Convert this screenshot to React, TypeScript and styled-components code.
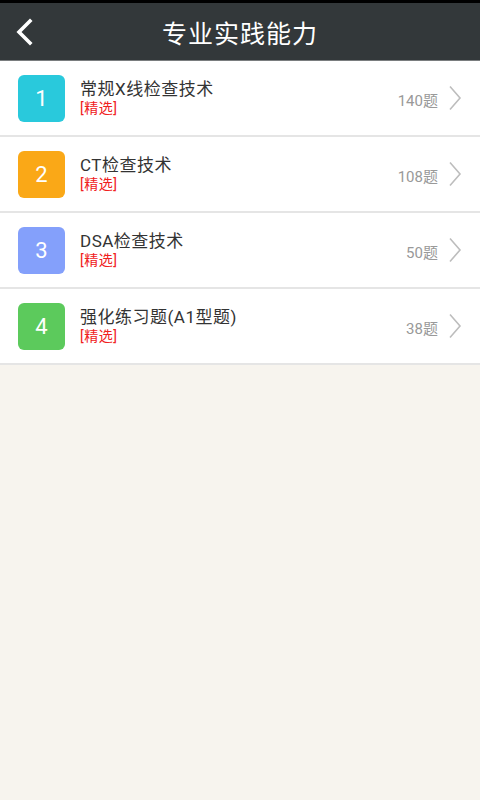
import { createGlobalStyle, styled } from "styled-components";

const GlobalStyle = createGlobalStyle`
  html, body {
    margin: 0;
    padding: 0;
    background: #f7f4ee;
  }
  body {
    font-family: Roboto, "Noto Sans CJK SC", "Noto Sans", sans-serif;
  }
`;

const Page = styled.div`
  width: 480px;
  min-height: 800px;
  background: #f7f4ee;
  display: flex;
  flex-direction: column;
`;

const StatusStrip = styled.div`
  height: 3px;
  background: #000;
`;

const Header = styled.header`
  position: relative;
  height: 57px;
  background: #33383a;
  border-bottom: 1px solid #7a7d7f;
  display: flex;
  align-items: center;
  justify-content: center;
`;

const BackButton = styled.button`
  position: absolute;
  left: 10px;
  top: 0;
  bottom: 0;
  margin: auto;
  width: 30px;
  height: 36px;
  padding: 0;
  border: none;
  background: transparent;
  display: flex;
  align-items: center;
  justify-content: center;
`;

const Title = styled.h1`
  margin: 0;
  color: #fff;
  font-size: 25px;
  font-weight: 400;
  letter-spacing: 1px;
`;

const List = styled.ul`
  margin: 0;
  padding: 0;
  list-style: none;
`;

const Row = styled.li`
  height: 74px;
  background: #fff;
  border-bottom: 2px solid #e5e5e5;
  display: flex;
  align-items: center;
  padding: 0 18px;
`;

const Badge = styled.div<{ $color: string }>`
  width: 47px;
  height: 47px;
  border-radius: 6px;
  background: ${({ $color }) => $color};
  color: #fff;
  font-size: 22px;
  display: flex;
  align-items: center;
  justify-content: center;
  flex-shrink: 0;
`;

const Texts = styled.div`
  flex: 1;
  margin-left: 15px;
  display: flex;
  flex-direction: column;
  gap: 1px;
  margin-top: -2px;
`;

const ItemTitle = styled.div`
  color: #333;
  font-size: 17px;
  line-height: 20px;
  letter-spacing: 0.5px;
`;

const Tag = styled.div`
  color: #f02020;
  font-size: 14px;
  line-height: 16px;
  letter-spacing: 0.5px;
`;

const Count = styled.div`
  color: #999;
  font-size: 15px;
  margin-top: 2px;
  margin-right: 10px;
`;

const Chevron = () => (
  <svg width="14" height="26" viewBox="0 0 14 26">
    <path d="M2 1.5 L12 13 L2 24.5" fill="none" stroke="#bdbdbd" strokeWidth="1.6" />
  </svg>
);

const items = [
  { n: 1, title: "常规X线检查技术", count: 140, color: "#29c9dc" },
  { n: 2, title: "CT检查技术", count: 108, color: "#faa817" },
  { n: 3, title: "DSA检查技术", count: 50, color: "#84a0fb" },
  { n: 4, title: "强化练习题(A1型题)", count: 38, color: "#5cca5c" },
];

export default function App() {
  return (
    <>
      <GlobalStyle />
      <Page>
        <StatusStrip />
        <Header>
          <BackButton aria-label="返回">
            <svg width="22" height="28" viewBox="0 0 22 28">
              <path d="M16 3 L5 14 L16 25" fill="none" stroke="#fff" strokeWidth="3.6" strokeLinecap="square" />
            </svg>
          </BackButton>
          <Title>专业实践能力</Title>
        </Header>
        <List>
          {items.map((it) => (
            <Row key={it.n}>
              <Badge $color={it.color}>{it.n}</Badge>
              <Texts>
                <ItemTitle>{it.title}</ItemTitle>
                <Tag>[精选]</Tag>
              </Texts>
              <Count>{it.count}题</Count>
              <Chevron />
            </Row>
          ))}
        </List>
      </Page>
    </>
  );
}
